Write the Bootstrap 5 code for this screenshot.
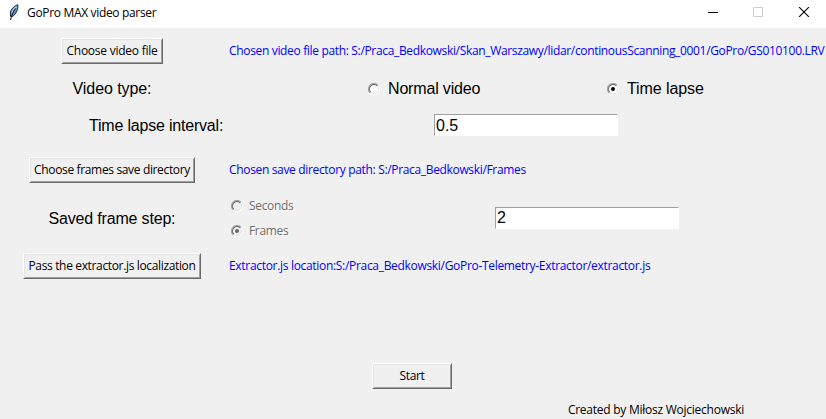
<!DOCTYPE html>
<html lang="en">
<head>
<meta charset="utf-8">
<meta name="viewport" content="width=device-width, initial-scale=1">
<title>GoPro MAX video parser</title>
<link href="https://cdn.jsdelivr.net/npm/bootstrap@5.3.0/dist/css/bootstrap.min.css" rel="stylesheet">
<style>
  body { font: 12px/16px "Open Sans", "Noto Sans", sans-serif; letter-spacing: -.35px; color: #000; background: #f0f0f0; }
  .window { height: 419px; white-space: nowrap; }
  .titlebar { height: 28px; background: #fff; padding-left: 8px; }
  .win-title { margin-left: 8px; letter-spacing: -.33px; margin-top: -2px; }
  .win-controls { gap: 35px; padding-right: 17px; margin-top: -4px; }
  .close-icon { margin-left: 1px; }
  .form-line { display: grid; grid-template-columns: 224px 1fr; align-items: center; }
  .h-file { height: 46px; } .h-type { height: 30px; } .h-interval { height: 42px; }
  .h-dir { height: 48px; } .h-step { height: 48px; } .h-js { height: 48px; }
  .tk-btn { height: 26px; padding: 0 4px; font: inherit; letter-spacing: inherit; color: #000; background: #f0f0f0; border: 1px solid; border-color: #fff #696969 #696969 #fff; border-radius: 0; box-shadow: inset 1px 1px #e3e3e3, inset -1px -1px #a0a0a0; }
  .w-file { width: 102px; letter-spacing: -.24px; } .w-dir { width: 166px; } .w-js { width: 178px; } .w-start { width: 80px; }
  .path-text { color: #0000ff; padding-left: 5px; letter-spacing: -.335px; }
  .js-path { letter-spacing: -.31px; }
  .big-text { font: 16px/20px "Liberation Sans", Arial, sans-serif; letter-spacing: -.08px; }
  .interval-label { padding-left: 89px; padding-top: 2px; letter-spacing: -.2px; }
  .step-label { letter-spacing: -.18px; padding-top: 2px; }
  .normal-option { margin-left: 144px; width: 239px; letter-spacing: -.17px; }
  .tk-entry { width: 184px; height: 22px; padding: 0 0 0 1px; color: #000; background: #fff; border: 1px solid; border-color: #a0a0a0 #fff #fff #a0a0a0; border-radius: 0; outline: 0; }
  .interval-entry { margin-left: 210px; padding-top: 1px; }
  .step-entry { margin-left: 202px; }
  .radio-icon { width: 12px; height: 12px; flex: none; }
  .unit-group { width: 62px; margin-left: 7px; gap: 9px; color: #6d6d6d; letter-spacing: -.33px; }
  .unit-text { margin-left: 6px; text-shadow: 1px 1px #fff; }
  .start-area { margin-top: 73px; padding-right: 2px; }
  .credit { padding-right: 82px; margin-top: 13px; letter-spacing: -.25px; }
</style>
<script src="https://cdn.jsdelivr.net/npm/bootstrap@5.3.0/dist/js/bootstrap.bundle.min.js"></script>
</head>
<body>
<svg width="0" height="0" class="d-none">
  <symbol id="ring" viewBox="0 0 12 12">
    <path d="M9.900 2.100A5.500 5.500 0 0 1 2.100 9.900" fill="none" stroke="#fff"/>
    <path d="M9.200 2.800A4.500 4.500 0 0 1 2.800 9.200" fill="none" stroke="#e3e3e3"/>
    <path d="M2.100 9.900A5.500 5.500 0 0 1 9.900 2.100" fill="none" stroke="#a0a0a0" stroke-width="1.100"/>
    <path d="M2.800 9.200A4.500 4.500 0 0 1 9.200 2.800" fill="none" stroke="#696969" stroke-width="1.100"/>
  </symbol>
</svg>
<main class="window d-flex flex-column overflow-hidden">
  <header class="titlebar d-flex align-items-center">
    <svg width="11" height="17" viewBox="0 0 11 17" class="mb-1">
      <path d="M9.800.8C6.800 1.300 3 5 2.300 8.500L2.600 12.500 5 12.200C8.500 9.500 10.400 4.500 9.800.8Z" fill="#5c93cf" stroke="#1c2733" stroke-width="1"/>
      <path d="M8.700 2.500C6.500 4 4.500 6.500 4 9" fill="none" stroke="#a9cdf0" stroke-width="1.200"/>
      <path d="M7.500 4.500C5.500 7.500 3.500 11 2.500 16" fill="none" stroke="#111" stroke-width="1"/>
    </svg>
    <span class="win-title">GoPro MAX video parser</span>
    <div class="win-controls d-flex ms-auto">
      <svg width="10" height="10"><path d="M0 5.500H10" stroke="#000"/></svg>
      <svg width="10" height="10"><path d="M.5.5h9v9h-9z" fill="none" stroke="#ccc"/></svg>
      <svg class="close-icon" width="10" height="10"><path d="M0 0 10 10M10 0 0 10" stroke="#000" stroke-width="1.100"/></svg>
    </div>
  </header>

  <div class="form-line h-file">
    <div class="text-center"><button type="button" class="btn tk-btn w-file">Choose video file</button></div>
    <div class="path-text">Chosen video file path: S:/Praca_Bedkowski/Skan_Warszawy/lidar/continousScanning_0001/GoPro/GS010100.LRV</div>
  </div>

  <div class="form-line h-type big-text">
    <div class="text-center">Video type:</div>
    <div class="d-flex">
      <div class="normal-option d-flex align-items-center">
        <svg class="radio-icon" viewBox="0 0 12 12"><circle cx="6" cy="6" r="5" fill="#fff"/><use href="#ring"/></svg>
        <span class="ms-2">Normal video</span>
      </div>
      <div class="d-flex align-items-center">
        <svg class="radio-icon" viewBox="0 0 12 12"><circle cx="6" cy="6" r="5" fill="#fff"/><use href="#ring"/><circle cx="6" cy="6" r="2" fill="#000"/></svg>
        <span class="ms-2">Time lapse</span>
      </div>
    </div>
  </div>

  <div class="form-line h-interval big-text">
    <div class="interval-label">Time lapse interval:</div>
    <div class="d-flex"><input type="text" class="tk-entry interval-entry" value="0.5" aria-label="Time lapse interval"></div>
  </div>

  <div class="form-line h-dir">
    <div class="text-center"><button type="button" class="btn tk-btn w-dir">Choose frames save directory</button></div>
    <div class="path-text">Chosen save directory path: S:/Praca_Bedkowski/Frames</div>
  </div>

  <div class="form-line h-step">
    <div class="big-text step-label text-center">Saved frame step:</div>
    <div class="d-flex align-items-center">
      <div class="unit-group d-flex flex-column">
        <div class="d-flex align-items-center">
          <svg class="radio-icon" viewBox="0 0 12 12"><circle cx="6" cy="6" r="5" fill="#f0f0f0"/><use href="#ring"/></svg>
          <span class="unit-text">Seconds</span>
        </div>
        <div class="d-flex align-items-center">
          <svg class="radio-icon" viewBox="0 0 12 12"><circle cx="6" cy="6" r="5" fill="#f0f0f0"/><use href="#ring"/><circle cx="6" cy="6" r="2" fill="#696969"/></svg>
          <span class="unit-text">Frames</span>
        </div>
      </div>
      <input type="text" class="tk-entry step-entry big-text" value="2" aria-label="Saved frame step">
    </div>
  </div>

  <div class="form-line h-js">
    <div class="text-center"><button type="button" class="btn tk-btn w-js">Pass the extractor.js localization</button></div>
    <div class="path-text js-path">Extractor.js location:S:/Praca_Bedkowski/GoPro-Telemetry-Extractor/extractor.js</div>
  </div>

  <div class="start-area text-center"><button type="button" class="btn tk-btn w-start">Start</button></div>
  <footer class="credit text-end">Created by Miłosz Wojciechowski</footer>
</main>
</body>
</html>
